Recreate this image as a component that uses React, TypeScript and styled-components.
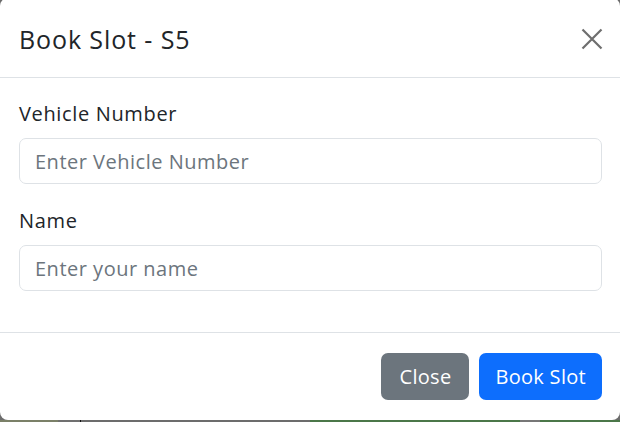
import React from "react";
import styled, { createGlobalStyle } from "styled-components";

const Global = createGlobalStyle`
  html, body { margin: 0; padding: 0; }
  body {
    width: 620px;
    height: 422px;
    overflow: hidden;
    background: #6c6c6c;
    font-family: "Open Sans", "Noto Sans", sans-serif;
    color: #212529;
  }
  * { box-sizing: border-box; }
`;

const Page = styled.div`
  display: flex;
  flex-direction: column;
  width: 620px;
  height: 422px;
`;

const Modal = styled.div`
  width: 620px;
  height: 422px;
  margin-top: -2px;
  background: #fff;
  border-radius: 8px;
  display: flex;
  flex-direction: column;
  overflow: hidden;
`;

const Header = styled.div`
  height: 80px;
  flex: none;
  display: flex;
  align-items: center;
  justify-content: space-between;
  padding: 2px 16px 0 19px;
  border-bottom: 1px solid #dee2e6;
`;

const Title = styled.h5`
  margin: 0;
  font-size: 25px;
  letter-spacing: 0.9px;
  font-weight: 500;
  line-height: 1.2;
  color: #212529;
`;

const CloseX = styled.button`
  width: 24px;
  height: 24px;
  padding: 0;
  border: 0;
  background: transparent;
  display: flex;
  align-items: center;
  justify-content: center;
  color: #6e6e6e;
`;

const Body = styled.div`
  flex: none;
  height: 254px;
  padding: 22px 18px 0 19px;
  display: flex;
  flex-direction: column;
  gap: 23px;
`;

const Field = styled.div`
  display: flex;
  flex-direction: column;
  gap: 11px;
`;

const Label = styled.label`
  font-size: 20px;
  letter-spacing: 0.65px;
  line-height: 27px;
  color: #212529;
`;

const Input = styled.input`
  width: 100%;
  height: 46px;
  border: 1px solid #dee2e6;
  border-radius: 7px;
  padding: 0 15px;
  font-family: inherit;
  font-size: 20px;
  letter-spacing: 0.5px;
  color: #212529;
  background: #fff;
  &::placeholder { color: #6c757d; }
`;

const Footer = styled.div`
  flex: 1;
  border-top: 1px solid #dee2e6;
  display: flex;
  justify-content: flex-end;
  align-items: flex-start;
  gap: 10px;
  padding: 20px 18px 0 0;
`;

const Button = styled.button<{ $variant: "secondary" | "primary" }>`
  height: 47px;
  border: 0;
  border-radius: 7px;
  padding: 0 ${(p) => (p.$variant === "primary" ? 16 : 18)}px;
  font-family: inherit;
  font-size: 20px;
  letter-spacing: 0.3px;
  color: #fff;
  background: ${(p) => (p.$variant === "primary" ? "#0d6efd" : "#6c757d")};
`;

const Strip = styled.div`
  flex: none;
  height: 2px;
  display: flex;
`;

const Seg = styled.div<{ $w: number; $c: string }>`
  width: ${(p) => p.$w}px;
  background: ${(p) => p.$c};
`;

const segments: [number, string][] = [
  [58, "#7b8068"],
  [22, "#707070"],
  [1, "#111"],
  [229, "#6c6c6c"],
  [210, "#4b7749"],
  [20, "#777"],
  [80, "#4b7749"],
];

export default function App() {
  return (
    <Page>
      <Global />
      <Modal>
        <Header>
          <Title>Book Slot - S5</Title>
          <CloseX aria-label="Close">
            <svg width="22" height="22" viewBox="0 0 22 22">
              <path d="M1.5 1.5 L20.5 20.5 M20.5 1.5 L1.5 20.5" stroke="currentColor" strokeWidth="2.2" fill="none" />
            </svg>
          </CloseX>
        </Header>
        <Body>
          <Field>
            <Label>Vehicle Number</Label>
            <Input placeholder="Enter Vehicle Number" />
          </Field>
          <Field>
            <Label>Name</Label>
            <Input placeholder="Enter your name" />
          </Field>
        </Body>
        <Footer>
          <Button $variant="secondary">Close</Button>
          <Button $variant="primary">Book Slot</Button>
        </Footer>
      </Modal>
      <Strip>
        {segments.map(([w, c], i) => (
          <Seg key={i} $w={w} $c={c} />
        ))}
      </Strip>
    </Page>
  );
}
